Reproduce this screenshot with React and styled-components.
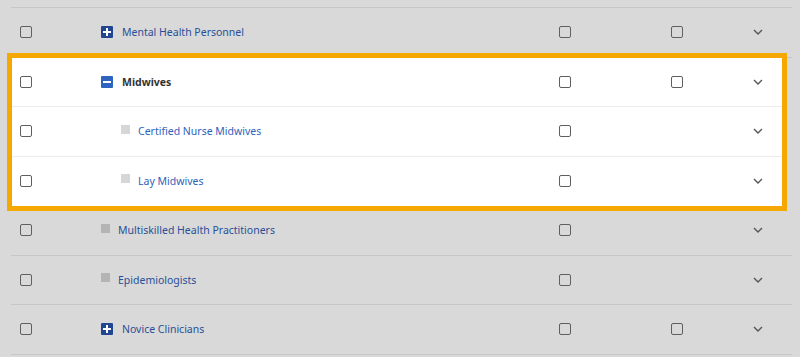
import React from "react";
import styled, { createGlobalStyle } from "styled-components";

const GlobalStyle = createGlobalStyle`
  html, body {
    margin: 0;
    padding: 0;
    background: #d9d9d9;
    font-family: "Noto Sans", "Open Sans", sans-serif;
  }
`;

const rows = [
  { id: 1, name: "Mental Health Personnel", kind: "plus", colB: true },
  {
    group: true,
    items: [
      { id: 2, name: "Midwives", kind: "minus", colB: true, bold: true },
      { id: 3, name: "Certified Nurse Midwives", kind: "leaf", child: true },
      { id: 4, name: "Lay Midwives", kind: "leaf", child: true },
    ],
  },
  { id: 5, name: "Multiskilled Health Practitioners", kind: "leaf" },
  { id: 6, name: "Epidemiologists", kind: "leaf" },
  { id: 7, name: "Novice Clinicians", kind: "plus", colB: true },
];

const Row = ({ row, lit }) => (
  <RowWrap $lit={lit}>
    <Cell $pad={9}>
      <Check $lit={lit} />
    </Cell>
    <NameCell $indent={row.child ? 20 : 0}>
      {row.kind === "leaf" ? (
        <Leaf $lit={lit} />
      ) : (
        <Toggle $lit={lit}>
          <svg width="8" height="8" viewBox="0 0 8 8">
            <rect x="0" y="3" width="8" height="2" fill="#fff" />
            {row.kind === "plus" && <rect x="3" y="0" width="2" height="8" fill="#fff" />}
          </svg>
        </Toggle>
      )}
      <Name $lit={lit} $bold={row.bold} $leaf={row.kind === "leaf"}>
        {row.name}
      </Name>
    </NameCell>
    <Cell>
      <Check $lit={lit} />
    </Cell>
    <Cell>{row.colB && <Check $lit={lit} />}</Cell>
    <Cell>
      <svg width="10" height="6" viewBox="0 0 10 6">
        <polyline points="1,1 5,5 9,1" fill="none" stroke="#555" strokeWidth="1.4" />
      </svg>
    </Cell>
  </RowWrap>
);

export default function App() {
  return (
    <>
      <GlobalStyle />
      <Page>
        <Table>
          {rows.map((r, i) =>
            r.group ? (
              <Group key={"g" + i}>
                {r.items.map((it) => (
                  <Row key={it.id} row={it} lit />
                ))}
              </Group>
            ) : (
              <Row key={r.id} row={r} />
            )
          )}
        </Table>
      </Page>
    </>
  );
}

const Page = styled.div`
  padding: 7px 8px 0 11px;
  height: 357px;
  box-sizing: border-box;
  overflow: hidden;
`;

const Table = styled.div`
  border-top: 1px solid #c6c6c6;
  width: 781px;
`;

const Group = styled.div`
  background: #fff;
  outline: 5px solid #f5a800;
  margin: 0 10px 0 1px;
`;

const RowWrap = styled.div`
  display: grid;
  grid-template-columns: 90px 458px 112px 82px 1fr;
  align-items: center;
  height: 48.5px;
  border-bottom: 1px solid ${(p) => (p.$lit ? "#ececec" : "#c6c6c6")};
  ${Group} & {
    grid-template-columns: 89px 458px 112px 82px 1fr;
  }
  ${Group} &:last-child {
    border-bottom-color: transparent;
  }
`;

const Cell = styled.div`
  display: flex;
  align-items: center;
  padding-left: ${(p) => p.$pad || 0}px;
  ${Group} &:first-child {
    padding-left: 8px;
  }
`;

const NameCell = styled.div`
  display: flex;
  align-items: center;
  padding-left: ${(p) => p.$indent}px;
`;

const Check = styled.span`
  display: block;
  width: 12px;
  height: 12px;
  box-sizing: border-box;
  border: 1.5px solid #5f5f5f;
  border-radius: 2px;
  background: ${(p) => (p.$lit ? "#fff" : "transparent")};
`;

const Toggle = styled.span`
  display: flex;
  align-items: center;
  justify-content: center;
  width: 12px;
  height: 12px;
  border-radius: 1px;
  background: ${(p) => (p.$lit ? "#2e64c0" : "#21468f")};
`;

const Leaf = styled.span`
  display: block;
  width: 9px;
  height: 9px;
  margin-top: -4px;
  background: ${(p) => (p.$lit ? "#d6d6d6" : "#b4b4b4")};
`;

const Name = styled.span`
  margin-left: ${(p) => (p.$leaf ? 8 : 9)}px;
  font-size: 10.5px;
  font-weight: ${(p) => (p.$bold ? 700 : 400)};
  color: ${(p) => (p.$bold ? "#333" : p.$lit ? "#2f62bc" : "#284f98")};
`;
